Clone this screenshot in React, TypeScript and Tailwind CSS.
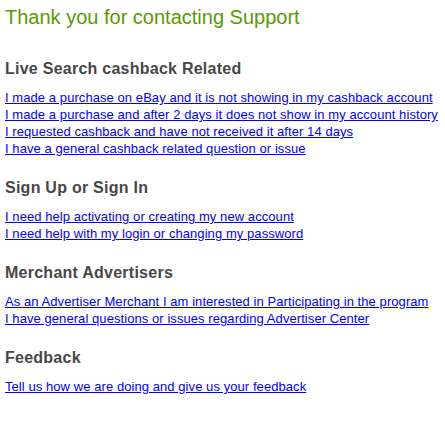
const SECTIONS = [
  {
    title: "Live Search cashback Related",
    links: [
      "I made a purchase on eBay and it is not showing in my cashback account",
      "I made a purchase and after 2 days it does not show in my account history",
      "I requested cashback and have not received it after 14 days",
      "I have a general cashback related question or issue",
    ],
  },
  {
    title: "Sign Up or Sign In",
    links: [
      "I need help activating or creating my new account",
      "I need help with my login or changing my password",
    ],
  },
  {
    title: "Merchant Advertisers",
    links: [
      "As an Advertiser Merchant I am interested in Participating in the program",
      "I have general questions or issues regarding Advertiser Center",
    ],
  },
  {
    title: "Feedback",
    links: ["Tell us how we are doing and give us your feedback"],
  },
];

export default function App() {
  return (
    <div className="min-h-[431px] w-[445px] bg-white pl-[5px] pt-[5px] font-['Liberation_Sans',Arial,sans-serif]">
      <h1 className="text-[20px] leading-[24px] text-[#5a9a00]">Thank you for contacting Support</h1>

      <div className="mt-[30px]">
        {SECTIONS.map(section => (
          <section key={section.title} className="mt-[21px]">
            <h2 className="text-[16px] leading-[20px] tracking-[0.25px] font-bold text-[#474747]">{section.title}</h2>
            <ul className="mt-[10px]">
              {section.links.map(link => (
                <li key={link} className="text-[13px] leading-[17px] tracking-[0.07px] whitespace-nowrap">
                  <a href="#" className="text-[#0000ff] underline">{link}</a>
                </li>
              ))}
            </ul>
          </section>
        ))}
      </div>
    </div>
  );
}
